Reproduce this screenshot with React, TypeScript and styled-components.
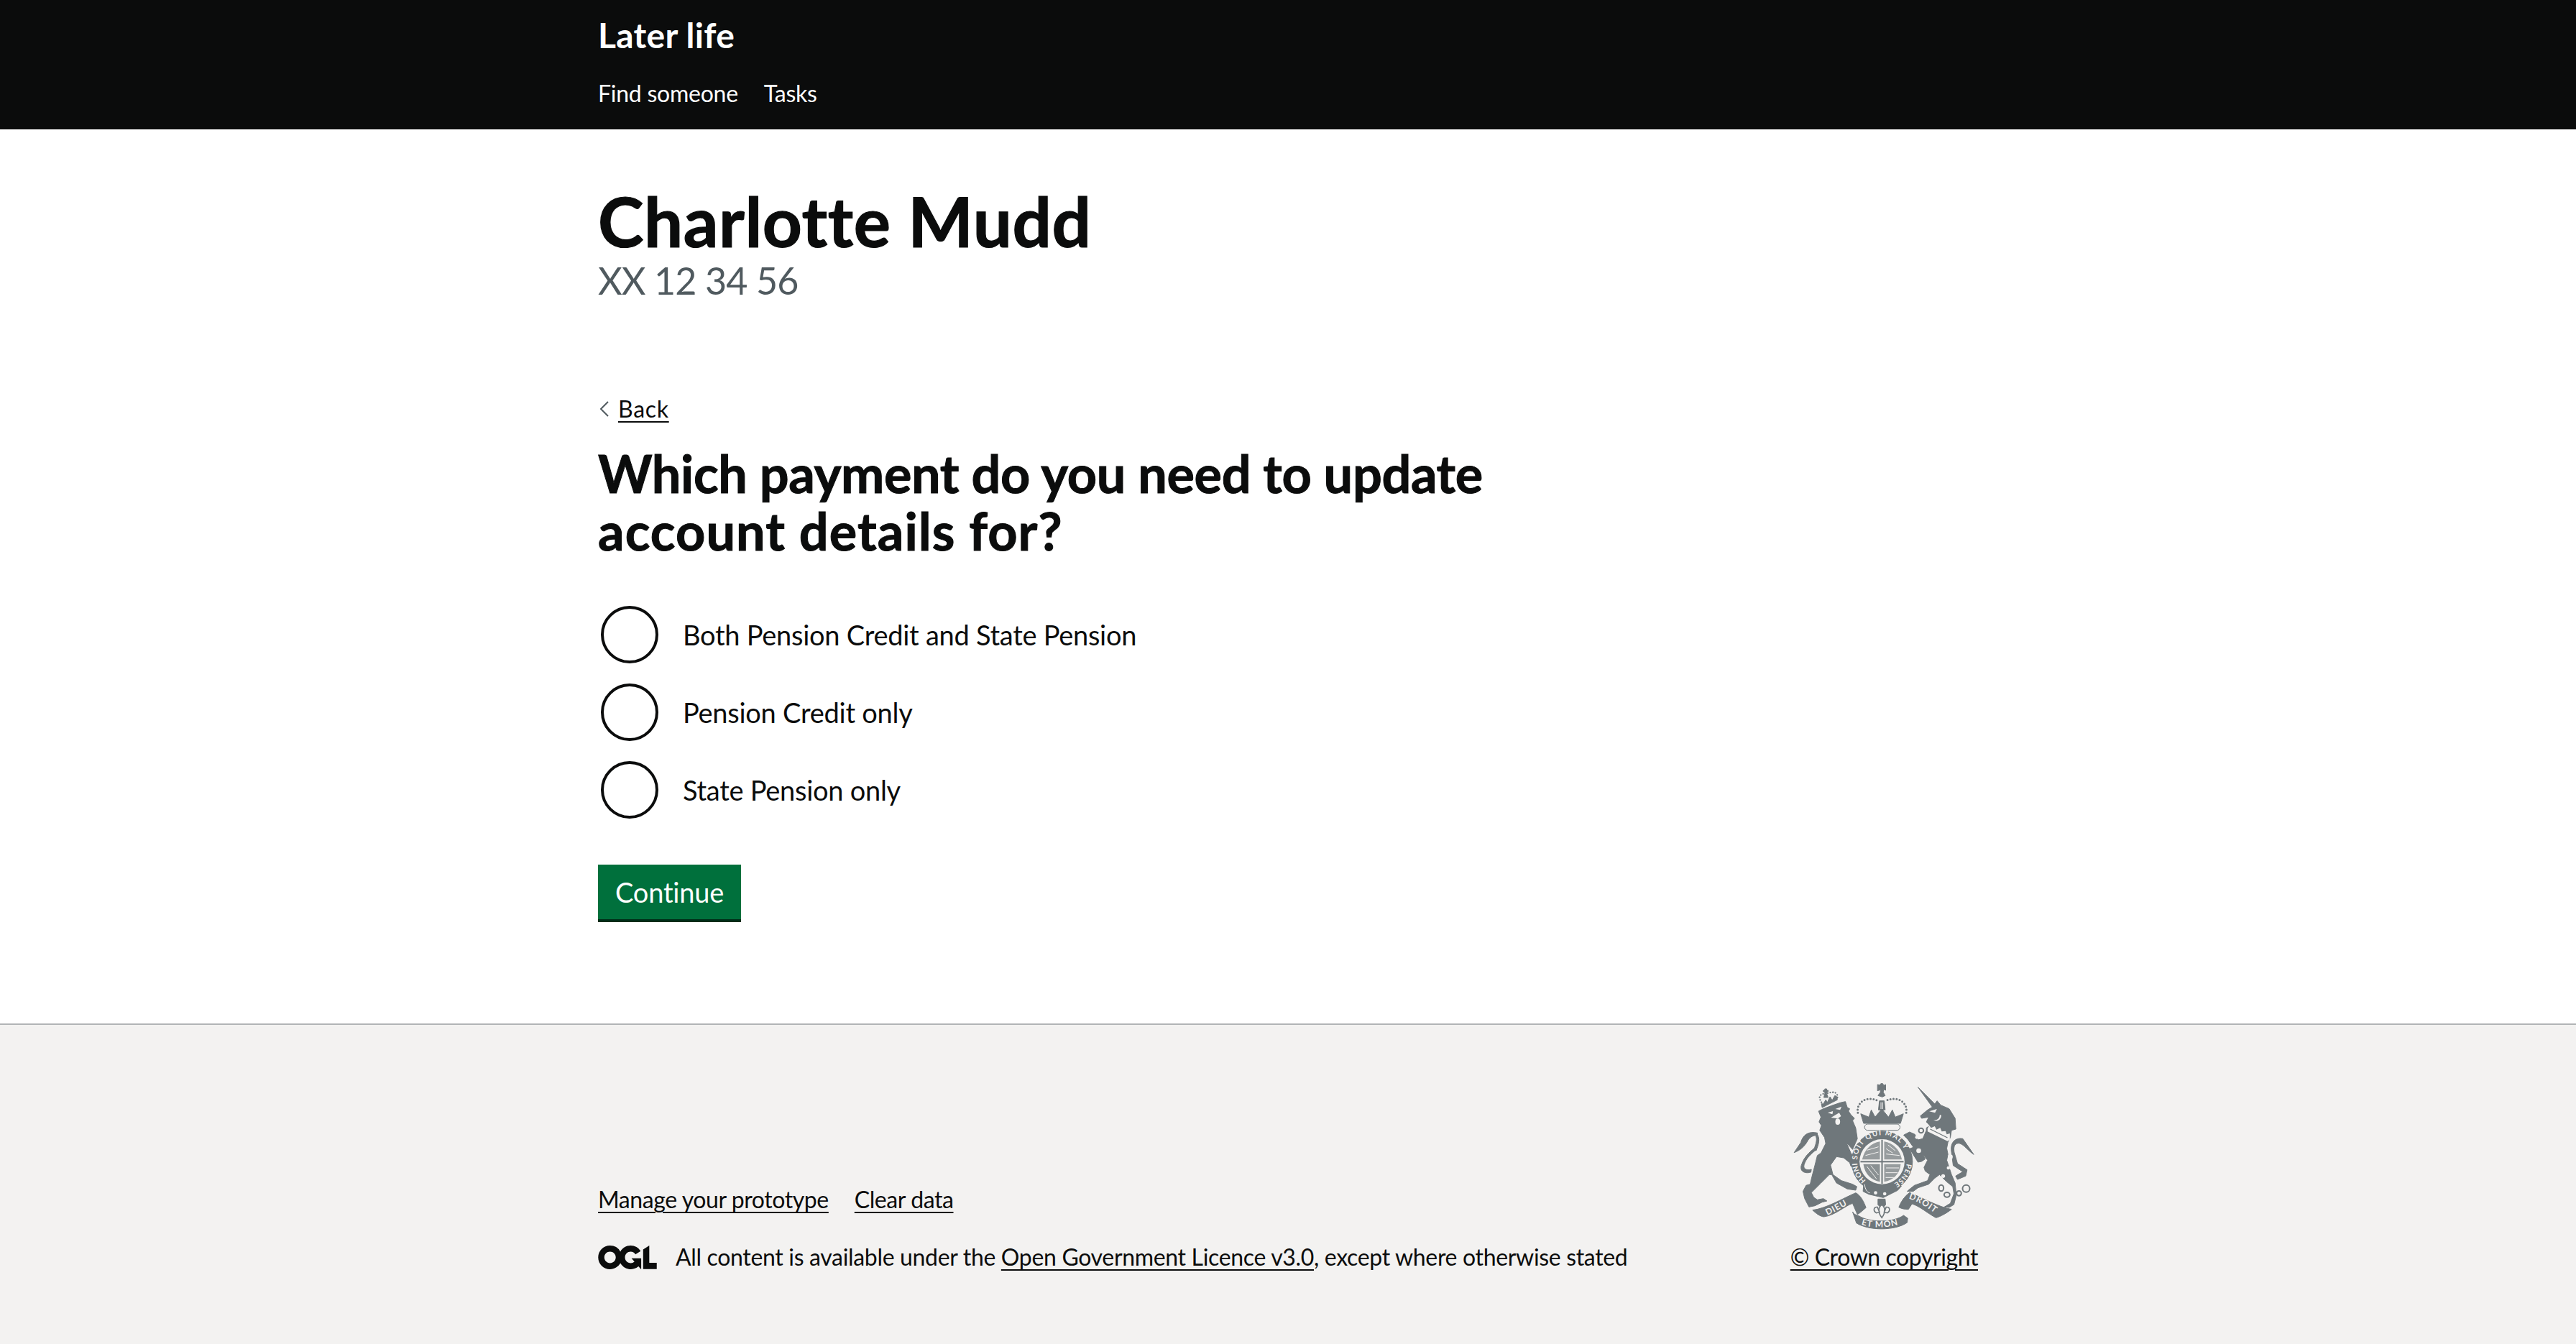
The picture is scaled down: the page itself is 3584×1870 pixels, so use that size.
import styled, { createGlobalStyle } from "styled-components";

const GlobalStyle = createGlobalStyle`
  html, body {
    margin: 0;
    padding: 0;
    background: #fff;
  }
  body {
    font-family: Lato, "Noto Sans", Arial, sans-serif;
    color: #0b0c0c;
  }
`;

const Page = styled.div`
  min-height: 1870px;
  display: flex;
  flex-direction: column;
`;

const Width = styled.div`
  width: 1920px;
  margin: 0 auto;
`;

const Header = styled.header`
  background: #0b0c0c;
  color: #fff;
  height: 180px;
  box-sizing: border-box;
  padding-top: 20px;
`;

const ServiceName = styled.div`
  font-size: 48px;
  line-height: 58px;
  font-weight: 700;
  letter-spacing: 0.3px;
`;

const Nav = styled.nav`
  display: flex;
  gap: 36px;
  margin-top: 32px;
`;

const NavItem = styled.span`
  font-size: 32px;
  line-height: 40px;
  letter-spacing: -0.25px;
`;

const Main = styled.main`
  flex: 1;
  padding-top: 69px;
`;

const PersonName = styled.h2`
  margin: 0;
  font-size: 96px;
  line-height: 116px;
  font-weight: 700;
  letter-spacing: 0.55px;
  -webkit-text-stroke: 1.2px #0b0c0c;
`;

const PersonId = styled.div`
  font-size: 52px;
  line-height: 64px;
  color: #505a5f;
  margin-top: -7px;
  letter-spacing: -0.9px;
`;

const BackRow = styled.div`
  display: flex;
  align-items: center;
  gap: 12px;
  margin-top: 127px;
  height: 40px;
`;

const BackChevron = styled.svg`
  width: 16px;
  height: 26px;
  display: block;
`;

const TextLink = styled.a`
  color: #0b0c0c;
  font-size: 32px;
  line-height: 40px;
  letter-spacing: -0.42px;
  text-decoration: underline;
  text-decoration-thickness: 2px;
  text-underline-offset: 5px;
`;

const BackLink = styled(TextLink)`
  letter-spacing: 0.7px;
`;

const LicenceLink = styled(TextLink)`
  letter-spacing: -0.33px;
`;

const Question = styled.h1`
  margin: 29px 0 0;
  width: 1280px;
  font-size: 72px;
  line-height: 80px;
  font-weight: 700;
  letter-spacing: -0.35px;
  -webkit-text-stroke: 1px #0b0c0c;
`;

const QuestionTail = styled.span`
  letter-spacing: 1.1px;
`;

const Radios = styled.div`
  display: flex;
  flex-direction: column;
  gap: 28px;
  margin-top: 65px;
`;

const RadioRow = styled.label`
  display: flex;
  align-items: center;
  gap: 34px;
  height: 80px;
  padding-left: 4px;
`;

const RadioCircle = styled.span`
  width: 80px;
  height: 80px;
  border: 4px solid #0b0c0c;
  border-radius: 50%;
  box-sizing: border-box;
  flex: none;
`;

const RadioText = styled.span`
  font-size: 38px;
  line-height: 50px;
  letter-spacing: -0.27px;
`;

const Button = styled.button`
  display: block;
  margin-top: 64px;
  padding: 0 24px;
  height: 76px;
  border: 0;
  border-radius: 0;
  background: #00703c;
  box-shadow: 0 4px 0 #002d18;
  color: #fff;
  font-family: inherit;
  font-size: 38px;
  line-height: 50px;
  letter-spacing: -0.2px;
`;

const Footer = styled.footer`
  background: #f3f2f1;
  border-top: 2px solid #b1b4b6;
  height: 446px;
  box-sizing: border-box;
  padding-top: 80px;
`;

const FooterInner = styled(Width)`
  display: flex;
  justify-content: space-between;
  align-items: flex-end;
`;

const FooterLeft = styled.div`
  display: flex;
  flex-direction: column;
`;

const FooterLinks = styled.div`
  display: flex;
  gap: 36px;
  margin-bottom: 40px;
`;

const LicenceRow = styled.div`
  display: flex;
  align-items: center;
  gap: 26px;
  font-size: 32px;
  line-height: 40px;
  letter-spacing: -0.33px;
`;

const OglLogo = styled.svg`
  width: 82px;
  height: 33px;
  display: block;
  color: #0b0c0c;
`;

const CopyrightColumn = styled.div`
  display: flex;
  flex-direction: column;
  align-items: center;
  gap: 18px;
`;

const Crest = styled.svg`
  width: 252px;
  height: 205px;
  display: block;
`;

const CrestText = styled.text`
  font-family: Lato, sans-serif;
  font-weight: 700;
  fill: #f3f2f1;
`;

const crestColour = "#6f777b";
const crestBg = "#f3f2f1";

function RoyalArms() {
  return (
    <Crest viewBox="105 45 755 615" aria-hidden="true">
      <defs>
        <path id="garterTop" d="M 372 368 A 103 103 0 0 1 578 368" />
        <path id="garterEnd" d="M 577 385 A 103 103 0 0 1 518 470" />
        <path id="garterLeft" d="M 408 454 A 103 103 0 0 1 372 385" />
        <path id="scrollLeft" d="M 246 600 C 280 586 320 560 350 545" />
        <path id="scrollRight" d="M 586 530 C 630 540 680 580 716 606" />
        <path id="scrollMid" d="M 388 638 C 430 654 510 654 562 632" />
      </defs>
      <g fill={crestColour} stroke={crestColour} strokeWidth="3" strokeLinejoin="round">
        {/* lion */}
        <path d="M210 165 L230 155 L265 142 L300 130 L322 125 L330 150 L340 155 L335 165 L345 180 L360 195 L352 205 L365 235 L372 280 L352 325 L326 296 L345 340 L352 350 L365 380 L370 400 L345 395 L340 380 L315 360 L285 355 L260 390 L270 430 L305 455 L352 470 L370 480 L365 495 L330 490 L285 465 L265 430 L255 430 L220 465 L180 505 L190 525 L205 535 L230 530 L245 540 L225 545 L195 560 L170 565 L152 530 L145 500 L158 475 L175 470 L182 440 L195 390 L205 350 L220 340 L240 300 L235 275 L215 245 L222 225 L212 210 L220 190 Z" />
        <path d="M205 256 C170 248 145 262 136 296 L108 338 C135 328 152 312 165 288 C176 270 190 266 205 266 Z" />
        <path d="M205 262 C216 280 212 300 200 330 L190 326 C202 296 204 280 198 268 Z" />
        <path d="M178 420 C150 428 128 414 140 386 C150 356 172 336 192 320 L198 328 C178 344 158 362 150 388 C144 406 160 414 180 408 Z" />
        {/* lion crown */}
        <path d="M225 150 L288 118 L288 106 L278 100 L267 120 L258 105 L247 128 L240 118 L230 135 L222 134 Z" />
        <path d="M236 92 L236 84 L230 84 L230 78 L236 78 L236 72 L244 72 L244 78 L250 78 L250 84 L244 84 L244 92 L250 108 L232 108 Z" />
        {/* main crown */}
        <path d="M466 56 L470 50 L478 50 L482 58 L490 54 L490 78 L482 74 L480 86 L488 100 L476 106 L458 100 L468 86 L468 76 L456 80 L456 54 Z" />
        <path d="M464 122 L484 122 L488 160 L460 160 Z" />
        <path d="M386 176 L420 190 L430 160 L446 190 L474 156 L502 190 L518 160 L530 190 L564 176 L552 216 L398 216 Z" />
        {/* unicorn */}
        <path d="M625 65 L695 135 L705 122 L720 140 L755 155 L780 195 L783 240 L765 245 L760 275 L750 295 L745 320 L750 345 L745 370 L755 400 L765 430 L780 465 L785 515 L775 555 L755 567 L735 565 L760 550 L775 510 L770 480 L745 460 L715 430 L695 445 L670 470 L625 485 L605 500 L580 500 L585 495 L610 475 L665 455 L675 430 L655 415 L650 400 L665 370 L645 345 L655 365 L640 375 L625 378 L590 322 L606 316 L582 282 L565 265 L590 252 L612 262 L625 285 L645 280 L660 245 L660 235 L675 225 L660 210 L670 190 L640 195 L635 185 L665 160 L685 148 Z" />
        <path d="M764 330 C760 296 780 274 812 280 L858 346 C836 332 818 306 800 300 C780 296 772 310 776 336 L790 384 L830 410 L824 436 L790 450 L782 436 L812 418 L772 392 Z" />
        {/* motto scroll */}
        <path d="M185 578 C240 572 310 530 365 506 C385 515 400 545 408 568 C395 578 385 590 372 596 L352 550 C320 560 280 600 232 606 C215 604 200 592 185 578 Z" />
        <path d="M352 585 C360 600 372 598 378 602 C420 630 520 632 565 600 L582 612 L580 630 C530 665 420 665 368 632 Z" />
        <path d="M545 566 C555 540 570 520 590 505 C640 525 710 565 765 575 C745 590 720 605 700 610 C670 595 630 560 600 552 L585 575 C570 575 555 572 545 566 Z" />
        {/* garter ring and strap */}
        <circle cx="475" cy="376" r="127" />
        <path d="M398 470 L396 500 L420 512 L480 526 L540 496 L556 478 Z" />
        {/* fleur de lis top */}
        <path d="M458 532 L488 532 L490 556 L474 572 L458 556 Z" />
      </g>
      <g fill={crestBg} stroke={crestColour} strokeWidth="5">
        <path d="M474 556 C490 566 490 590 474 610 C458 590 458 566 474 556 Z" />
        <path d="M456 566 C440 562 436 582 452 590 L464 586 Z" />
        <path d="M492 566 C508 562 512 582 496 590 L484 586 Z" />
      </g>
      {/* crown arches drawn as rows of pearls */}
      <g fill="none" stroke={crestColour} strokeWidth="9" strokeLinecap="round" strokeDasharray="0 13">
        <path d="M374 172 C366 130 410 96 462 124" />
        <path d="M576 172 C584 130 540 96 486 124" />
      </g>
      <g fill="none" stroke={crestColour} strokeWidth="7" strokeLinecap="round" strokeDasharray="0 11">
        <path d="M222 128 C204 100 222 92 240 92" />
        <path d="M248 90 C272 82 294 86 288 112" />
      </g>
      <rect x="402" y="219" width="148" height="26" rx="13" fill={crestBg} stroke={crestColour} strokeWidth="3" />
      {/* cut-outs */}
      <g fill={crestBg}>
        <rect x="469" y="128" width="3" height="28" />
        <rect x="476" y="128" width="3" height="28" />
        <path d="M280 156 L306 146 L300 160 Z M248 172 L270 165 L268 178 Z" />
        <path d="M262 192 L296 172 L304 186 L290 196 Z" />
        <ellipse cx="290" cy="209" rx="10" ry="13" />
        <path d="M672 166 L704 156 L696 172 Z" />
        <path d="M722 182 C722 200 705 212 690 202 C705 204 716 195 716 180 Z" />
        <path d="M665 238 L672 225 L680 235 L695 228 L702 242 L718 235 L724 250 L740 248 L745 262 L758 258 L758 285 L748 290 L665 250 Z" />
        <circle cx="760" cy="356" r="10" />
        <circle cx="730" cy="436" r="8" />
        <circle cx="752" cy="402" r="7" />
        <circle cx="620" cy="274" r="7" />
        <circle cx="628" cy="330" r="10" />
        <circle cx="475" cy="376" r="94" />
        <circle cx="448" cy="506" r="7" />
        <circle cx="486" cy="510" r="7" />
      </g>
      <path d="M676 240 L748 276" stroke={crestColour} strokeWidth="4" fill="none" />
      <path d="M402 470 C404 490 412 504 424 506" stroke={crestBg} strokeWidth="3" fill="none" />
      <g fill="none" stroke={crestColour} strokeWidth="6">
        <ellipse cx="722" cy="486" rx="10" ry="13" />
        <ellipse cx="746" cy="514" rx="12" ry="10" />
        <ellipse cx="796" cy="508" rx="10" ry="10" />
        <ellipse cx="826" cy="488" rx="15" ry="15" />
        <circle cx="638" cy="246" r="10" />
      </g>
      {/* shield quarters, kept inside the garter */}
      <g fill={crestColour}>
        <rect x="472" y="284" width="6" height="184" />
        <rect x="385" y="373" width="180" height="6" />
        <path d="M466 367 L466 292 C430 298 402 324 392 367 Z" opacity="0.7" />
        <path d="M484 367 L484 292 C520 298 548 324 558 367 Z" opacity="0.7" />
        <path d="M397 386 L466 386 L466 460 C430 452 404 430 397 386 Z" opacity="0.8" />
        <path d="M484 386 L553 386 C548 430 522 452 484 460 Z" opacity="0.7" />
      </g>
      <g stroke={crestBg} strokeWidth="3" fill="none">
        <path d="M406 350 L460 336 M412 328 L460 314" />
        <path d="M492 322 L520 340 M492 344 L548 350 M500 306 L530 330" />
        <path d="M412 396 L452 448 M428 392 L460 432" />
        <path d="M492 402 L546 402 M490 422 L540 422 M490 442 L524 442" />
      </g>
      <g fontSize="30">
        <CrestText letterSpacing="4">
          <textPath href="#garterTop">SOIT QUI MAL Y</textPath>
        </CrestText>
        <CrestText letterSpacing="2">
          <textPath href="#garterEnd">PENSE</textPath>
        </CrestText>
        <CrestText letterSpacing="1">
          <textPath href="#garterLeft">HONI</textPath>
        </CrestText>
      </g>
      <g fontSize="36">
        <CrestText letterSpacing="3">
          <textPath href="#scrollLeft">DIEU</textPath>
        </CrestText>
        <CrestText letterSpacing="3">
          <textPath href="#scrollRight">DROIT</textPath>
        </CrestText>
        <CrestText letterSpacing="3">
          <textPath href="#scrollMid">ET MON</textPath>
        </CrestText>
      </g>
    </Crest>
  );
}

const options = [
  "Both Pension Credit and State Pension",
  "Pension Credit only",
  "State Pension only",
];

export default function App() {
  return (
    <Page>
      <GlobalStyle />
      <Header>
        <Width>
          <ServiceName>Later life</ServiceName>
          <Nav>
            <NavItem>Find someone</NavItem>
            <NavItem>Tasks</NavItem>
          </Nav>
        </Width>
      </Header>
      <Main>
        <Width>
          <PersonName>Charlotte Mudd</PersonName>
          <PersonId>XX 12 34 56</PersonId>
          <BackRow>
            <BackChevron viewBox="0 0 16 26">
              <path d="M14 3 L4 13 L14 23" fill="none" stroke="#505a5f" strokeWidth="2" />
            </BackChevron>
            <BackLink href="#">Back</BackLink>
          </BackRow>
          <Question>
            Which payment do you need to update <QuestionTail>account details for?</QuestionTail>
          </Question>
          <Radios>
            {options.map((option) => (
              <RadioRow key={option}>
                <RadioCircle />
                <RadioText>{option}</RadioText>
              </RadioRow>
            ))}
          </Radios>
          <Button>Continue</Button>
        </Width>
      </Main>
      <Footer>
        <FooterInner>
          <FooterLeft>
            <FooterLinks>
              <TextLink href="#">Manage your prototype</TextLink>
              <TextLink href="#">Clear data</TextLink>
            </FooterLinks>
            <LicenceRow>
              <OglLogo viewBox="0 0 483.2 195.7">
                <path
                  fill="currentColor"
                  d="M421.5 142.8V.1l-50.7 32.3v161.1h112.4v-50.7zm-122.3-9.6A47.12 47.12 0 0 1 221 97.8c0-26 21.1-47.1 47.1-47.1 16.7 0 31.4 8.7 39.7 21.8l42.7-27.2A97.63 97.63 0 0 0 268.1 0c-36.5 0-68.3 20.1-85.1 49.7A98 98 0 0 0 97.8 0C43.9 0 0 43.9 0 97.8s43.9 97.8 97.8 97.8c36.5 0 68.3-20.1 85.1-49.7a97.76 97.76 0 0 0 149.6 25.4l19.4 22.2h3v-87.8h-80l24.3 27.5zM97.8 145c-26 0-47.1-21.1-47.1-47.1s21.1-47.1 47.1-47.1 47.2 21 47.2 47S123.8 145 97.8 145"
                />
              </OglLogo>
              <span>
                All content is available under the <LicenceLink href="#">Open Government Licence v3.0</LicenceLink>,
                except where otherwise stated
              </span>
            </LicenceRow>
          </FooterLeft>
          <CopyrightColumn>
            <RoyalArms />
            <TextLink href="#">© Crown copyright</TextLink>
          </CopyrightColumn>
        </FooterInner>
      </Footer>
    </Page>
  );
}
